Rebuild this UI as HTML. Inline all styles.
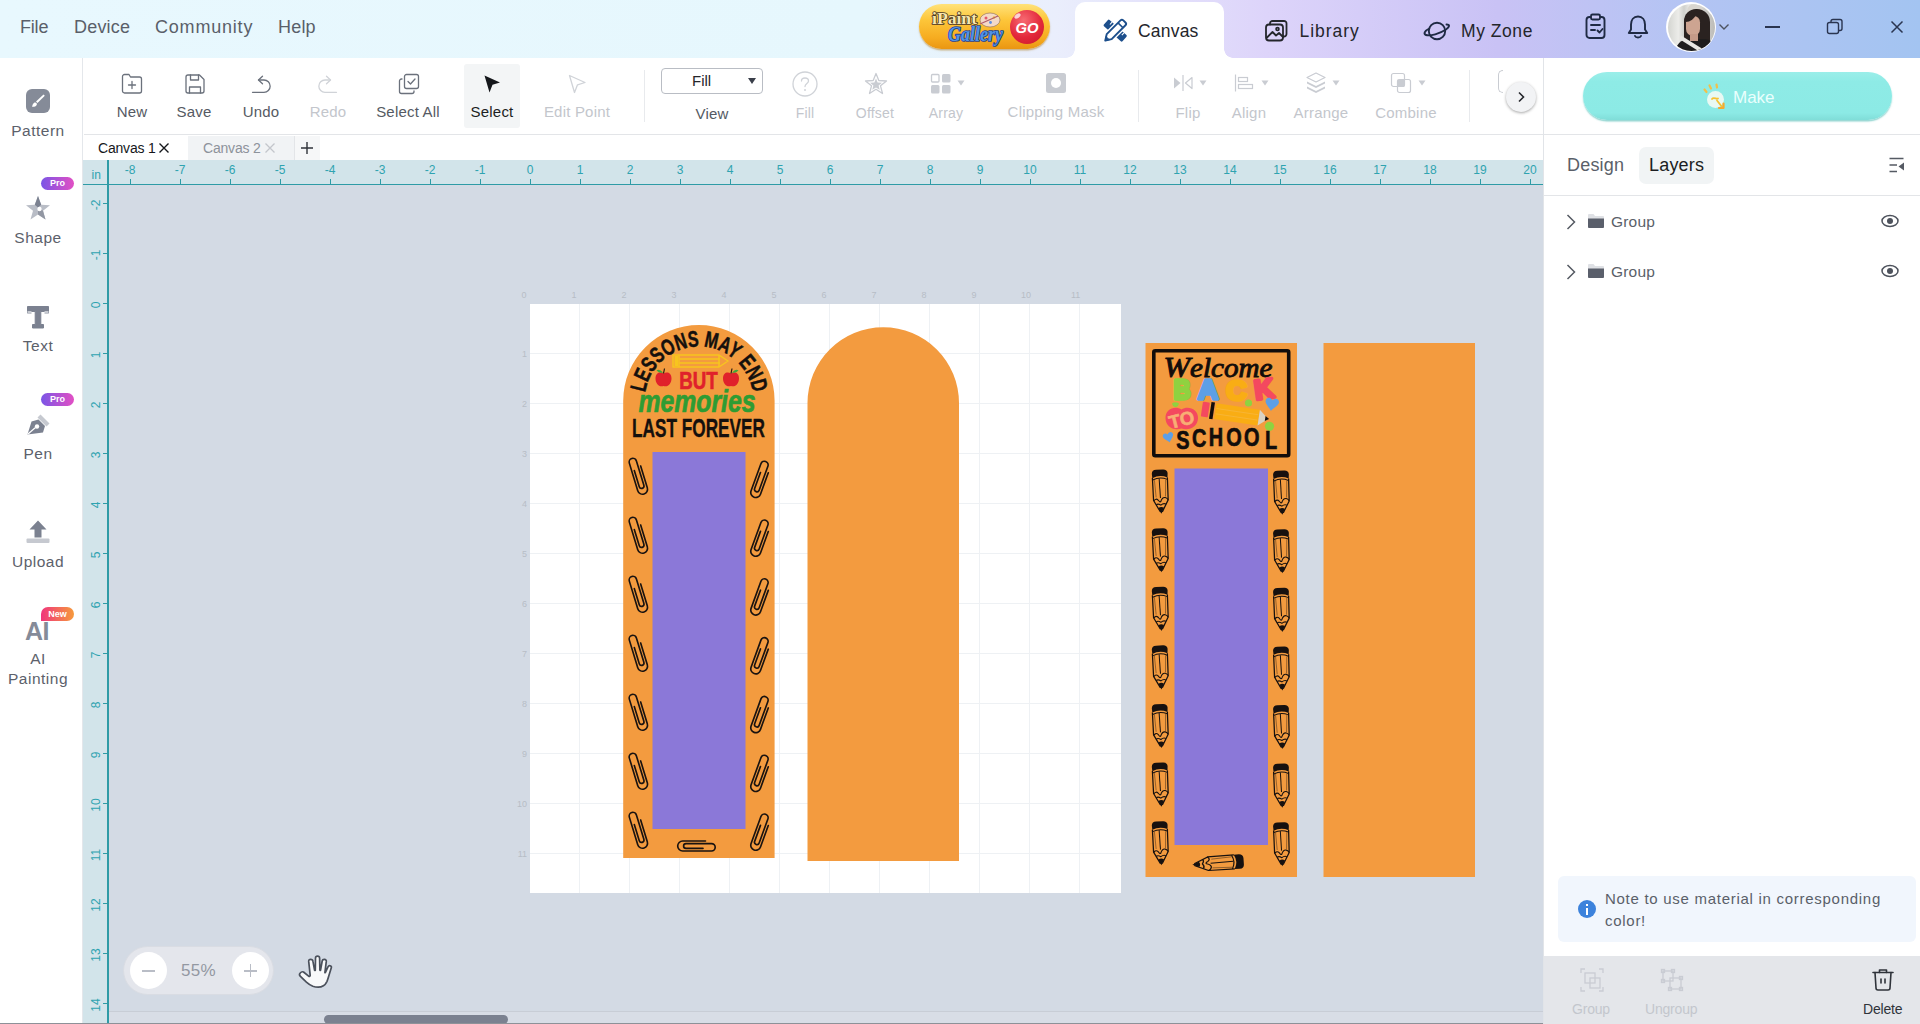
<!DOCTYPE html>
<html><head><meta charset="utf-8"><title>Canvas</title>
<style>
*{box-sizing:border-box;margin:0;padding:0}
html,body{width:1920px;height:1024px;overflow:hidden;background:#fff;font-family:"Liberation Sans",sans-serif;color:#555a63}
.abs{position:absolute}
#top{position:absolute;left:0;top:0;width:1920px;height:58px;background:linear-gradient(90deg,#e8f8fe 0%,#e6f7fd 45%,#eaeefc 55%,#ddd4fa 66%,#c9c2f5 78%,#b3c4f3 88%,#a3c4f1 100%)}
.menu{position:absolute;top:17px;font-size:18px;color:#5a5f69;letter-spacing:.2px}
#tabactive{position:absolute;left:1074.500px;top:2px;width:149.500px;height:56px;background:#fff;border-radius:10px 10px 0 0}
.toptab{position:absolute;top:21px;font-size:17.500px;line-height:20px;color:#24262b}
#side{position:absolute;left:0;top:58px;width:83px;height:966px;background:#fff;border-right:1px solid #e4e7eb}
.sitem{position:absolute;left:0;width:76px;text-align:center;font-size:15.5px;color:#5c616b;letter-spacing:.5px;line-height:20px}
.badge{position:absolute;height:13px;border-radius:7px;color:#fff;font-size:9px;line-height:13px;text-align:center;font-weight:bold}
#tool{position:absolute;left:84px;top:58px;width:1459px;height:77px;background:#fff;border-bottom:1px solid #e3e5e8}
.tl{position:absolute;top:45px;font-size:15px;color:#555a63;text-align:center;white-space:nowrap;transform:translateX(-50%);letter-spacing:.2px}
.tl.dis{color:#c3c6cc}
.ti{position:absolute}
#tabs{position:absolute;left:84px;top:135px;width:1459px;height:25px;background:#fff}
#hr{position:absolute;left:83px;top:160px;width:1460px;height:25px;background:#d2e4ea;border-bottom:1px solid #2e9ba6}
#vr{position:absolute;left:83px;top:160px;width:26px;height:864px;background:#d2e4ea;border-right:2px solid #2e9ba6}
.hn{position:absolute;top:3px;font-size:12px;color:#2fa3b0;transform:translateX(-50%);white-space:nowrap}
.ht{position:absolute;top:19px;width:1px;height:5px;background:#2e9ba6}
.vn{position:absolute;left:-2px;width:30px;height:14px;line-height:14px;font-size:12px;color:#2fa3b0;text-align:center;transform:rotate(-90deg);white-space:nowrap}
.vt{position:absolute;left:20px;width:4px;height:1px;background:#2e9ba6}
#cv{position:absolute;left:109px;top:185px;width:1434px;height:839px;background:#d3dae4;overflow:hidden}
#mat{position:absolute;left:421px;top:119px;width:591px;height:589px;background:#fff;
 background-image:linear-gradient(90deg,#eef1f4 1px,transparent 1px),linear-gradient(#eef1f4 1px,transparent 1px);background-size:50px 50px;background-position:-1px -1px}
.mn{position:absolute;font-size:9px;color:#b7bdc6;white-space:nowrap}
#right{position:absolute;left:1543px;top:58px;width:377px;height:966px;background:#fff;border-left:1px solid #e1e4e8}
</style></head><body>
<div id="top">
 <div class="menu" style="left:20px;letter-spacing:-.2px">File</div>
 <div class="menu" style="left:74px">Device</div>
 <div class="menu" style="left:155px;letter-spacing:.8px">Community</div>
 <div class="menu" style="left:278px">Help</div>
 <!-- gallery badge -->
 <div class="abs" style="left:918.500px;top:4px;width:131px;height:45px;border-radius:23px;background:linear-gradient(180deg,#ffe27a 0%,#fdc63a 35%,#f6ac20 75%,#ea9612 100%);box-shadow:0 1.500px 1.500px rgba(170,115,20,.5)"></div>
 <div class="abs" style="left:1010px;top:9.500px;width:34px;height:34px;border-radius:50%;background:radial-gradient(circle at 40% 30%,#f76a72 0%,#e3283a 55%,#c9152a 100%)"></div>
 <div class="abs" style="left:1014px;top:14px;width:7px;height:4px;border-radius:50%;background:rgba(255,255,255,.75);transform:rotate(-35deg)"></div>
 <svg class="abs" style="left:918px;top:0" width="132" height="54" viewBox="0 0 132 54">
  <ellipse cx="72" cy="20" rx="10" ry="7" fill="#f4d9c6" stroke="#8a6a58" stroke-width=".600"/>
  <circle cx="68" cy="18" r="1.500" fill="#e25a6a"/><circle cx="72.500" cy="22.500" r="1.400" fill="#5d8fe0"/><circle cx="76" cy="17.500" r="1.300" fill="#f2c23e"/>
  <path d="M62 24 L80 16" stroke="#b05a6a" stroke-width="1.200"/>
  <text x="14" y="24" font-family="Liberation Serif, serif" font-weight="bold" font-size="16.500" fill="#f6e7ae" stroke="#4a3526" stroke-width="1.600" paint-order="stroke" stroke-linejoin="round" textLength="45" lengthAdjust="spacingAndGlyphs">iPaint</text>
  <text x="30" y="41" font-family="Liberation Serif, serif" font-weight="bold" font-style="italic" font-size="20" fill="#4f93e6" stroke="#1f3f8f" stroke-width="1.700" paint-order="stroke" stroke-linejoin="round" textLength="55" lengthAdjust="spacingAndGlyphs">Gallery</text>
  <text x="109" y="32.500" font-family="Liberation Sans, sans-serif" font-weight="bold" font-style="italic" font-size="15" fill="#fff" text-anchor="middle" textLength="23" lengthAdjust="spacingAndGlyphs">GO</text>
 </svg>
 <div id="tabactive"></div>
 <div class="abs" style="left:1066px;top:49px;width:9px;height:9px;background:radial-gradient(circle at 0 0,rgba(255,255,255,0) 8.500px,#fff 9px)"></div>
 <div class="abs" style="left:1224px;top:49px;width:9px;height:9px;background:radial-gradient(circle at 100% 0,rgba(255,255,255,0) 8.500px,#fff 9px)"></div>
 <!-- canvas icon -->
 <svg class="abs" style="left:1101px;top:17px" width="28" height="28" viewBox="0 0 28 28"><g transform="translate(14.200 13.600)"><g transform="rotate(42)"><rect x="-12.500" y="-4.200" width="25" height="8.400" rx="1.200" fill="#1d4f8c"/><path d="M-8 -4.200 v3.200 M-4 -4.200 v2.400 M4 -4.200 v2.400 M8 -4.200 v3.200" stroke="#fff" stroke-width="1.100"/></g><g transform="rotate(-45)"><path d="M-14 0 L-8.500 -3.500 H11 a2 2 0 0 1 2 2 V1.500 a2 2 0 0 1 -2 2 H-8.500 Z" fill="#fff" stroke="#fff" stroke-width="4.500" stroke-linejoin="round"/><path d="M-14 0 L-8.500 -3.500 H11 a2 2 0 0 1 2 2 V1.500 a2 2 0 0 1 -2 2 H-8.500 Z" fill="#fff" stroke="#1d4f8c" stroke-width="1.900" stroke-linejoin="round"/><path d="M7.500 -3.500 V3.500" stroke="#1d4f8c" stroke-width="1.600"/><path d="M-14 0 L-10.800 -2.100 V2.100 Z" fill="#1d4f8c" stroke="#1d4f8c" stroke-width="1"/></g></g></svg>
 <div class="toptab" style="left:1138px;letter-spacing:.2px">Canvas</div>
 <!-- library icon -->
 <svg class="abs" style="left:1263px;top:18px" width="26" height="26" viewBox="0 0 26 26"><g fill="none" stroke="#24262b" stroke-width="1.8" stroke-linejoin="round" stroke-linecap="round"><rect x="3" y="6.5" width="17" height="16" rx="3"/><path d="M7 6.5 V5.5 a2.5 2.5 0 0 1 2.5 -2.5 H21 a2.5 2.5 0 0 1 2.500 2.500 V16 a2.500 2.500 0 0 1 -2.500 2.500 H20"/><path d="M4 19.500 L9.500 14 L13 17.500 L16 15 L20 19"/><circle cx="14.500" cy="11" r="1.400"/></g></svg>
 <div class="toptab" style="left:1299.500px;letter-spacing:.95px">Library</div>
 <!-- my zone icon -->
 <svg class="abs" style="left:1422px;top:17px" width="30" height="28" viewBox="0 0 30 28"><g fill="none" stroke="#1f2a44" stroke-width="1.9" stroke-linecap="round"><circle cx="15" cy="14" r="8.200"/><path d="M7.300 11.500 C2 14 1.500 17 4 18 C8 19.500 18 16.500 24 12.500 C28 9.800 28 7.300 24.500 7.500"/></g></svg>
 <div class="toptab" style="left:1461px;letter-spacing:.55px">My Zone</div>
 <!-- clipboard -->
 <svg class="abs" style="left:1583px;top:12px" width="26" height="30" viewBox="0 0 26 30"><g fill="none" stroke="#1f2a44" stroke-width="1.9" stroke-linejoin="round" stroke-linecap="round"><rect x="3.500" y="5" width="18" height="21" rx="3"/><rect x="8" y="2.500" width="9" height="5" rx="1.500" fill="#c9c6f4"/><path d="M8 13 H17 M8 18 H12"/><path d="M14.500 18.500 L16.500 20.500 L19.500 17"/></g></svg>
 <!-- bell -->
 <svg class="abs" style="left:1625px;top:13px" width="26" height="28" viewBox="0 0 26 28"><g fill="none" stroke="#1f2a44" stroke-width="1.9" stroke-linejoin="round" stroke-linecap="round"><path d="M13 3.500 C8.500 3.500 6 7 6 11.500 V16.500 L3.800 20 H22.200 L20 16.500 V11.500 C20 7 17.500 3.500 13 3.500 Z"/><path d="M10 23 C10.800 25 15.200 25 16 23"/></g></svg>
 <!-- avatar -->
 <div class="abs" style="left:1666px;top:2px;width:50px;height:50px;border-radius:50%;background:#fff"></div>
 <div class="abs" style="left:1667.500px;top:3.500px;width:47px;height:47px;border-radius:50%;overflow:hidden;background:linear-gradient(90deg,#d4d5d1 0%,#ecece9 22%,#cfd0cc 34%,#e6e6e3 44%,#bdbcb8 100%)">
   <div class="abs" style="left:19px;top:0;width:16px;height:9px;border-radius:8px 8px 2px 2px;background:#d9d6d0"></div>
   <div class="abs" style="left:16px;top:5px;width:26px;height:38px;border-radius:12px 13px 4px 4px;background:#2a2220"></div>
   <div class="abs" style="left:18.500px;top:12px;width:14px;height:20px;border-radius:6px 7px 8px 8px;background:#cda491"></div>
   <div class="abs" style="left:18px;top:10px;width:9px;height:8px;border-radius:0 0 8px 0;background:#2a2220;transform:skewX(-18deg)"></div>
   <div class="abs" style="left:7px;top:35px;width:40px;height:14px;border-radius:14px 10px 0 0;background:#1e1c1c"></div>
   <div class="abs" style="left:22px;top:30px;width:8px;height:7px;background:#c49a88"></div>
   <div class="abs" style="left:10px;top:38px;width:26px;height:4px;background:#e8e6e2;transform:rotate(32deg)"></div>
 </div>
 <svg class="abs" style="left:1718px;top:23px" width="12" height="8" viewBox="0 0 12 8"><path d="M1.500 1.500 L6 6 L10.500 1.500" fill="none" stroke="#4d5360" stroke-width="1.400"/></svg>
 <!-- window controls -->
 <div class="abs" style="left:1765px;top:26px;width:15px;height:1.500px;background:#2a3550"></div>
 <svg class="abs" style="left:1825px;top:17px" width="20" height="20" viewBox="0 0 20 20"><g fill="none" stroke="#2a3550" stroke-width="1.400"><rect x="2.500" y="5.500" width="11" height="11" rx="2"/><path d="M6 5.500 V4.500 a2 2 0 0 1 2 -2 H15 a2 2 0 0 1 2 2 V11.500 a2 2 0 0 1 -2 2 H13.500"/></g></svg>
 <svg class="abs" style="left:1889px;top:19px" width="16" height="16" viewBox="0 0 16 16"><path d="M2.500 2.500 L13.500 13.500 M13.500 2.500 L2.500 13.500" stroke="#2a3550" stroke-width="1.500" fill="none"/></svg>
</div>
<div id="side">
 <!-- Pattern -->
 <div class="abs" style="left:26px;top:31px;width:24px;height:24px;border-radius:6px;background:#858b98"></div>
 <svg class="abs" style="left:26px;top:31px" width="24" height="24" viewBox="0 0 24 24"><path d="M17.500 5.500 L18.800 6.800 L11.500 14 L10 12.500 Z" fill="#fff"/><path d="M6 17.800 C6.500 16.800 6.600 14.500 8.500 13.600 C10 13 11.300 14.300 10.800 15.800 C10 17.800 7.500 18 6 17.800 Z" fill="#fff"/></svg>
 <div class="sitem" style="top:63px">Pattern</div>
 <!-- Shape -->
 <div class="badge" style="left:41px;top:119px;width:33px;background:linear-gradient(90deg,#7a55e6,#e24fc4)">Pro</div>
 <svg class="abs" style="left:25px;top:136px" width="26" height="28" viewBox="0 0 26 28"><path d="M13 2 L16.200 10.800 L25 11.200 L18 16.800 L20.500 25.500 L13 20.500 L5.500 25.500 L8 16.800 L1 11.200 L9.800 10.800 Z" fill="#b9bdc6"/><path d="M13 2 L16.200 10.800 L13 13.500 L9.800 10.800 Z" fill="#7b8190"/><path d="M13 13.500 L18 16.800 L20.500 25.500 L13 20.500 Z" fill="#9297a3"/><circle cx="14.500" cy="15" r="2.200" fill="#fff"/></svg>
 <div class="sitem" style="top:170px">Shape</div>
 <!-- Text -->
 <svg class="abs" style="left:26px;top:247px" width="24" height="26" viewBox="0 0 24 26"><path d="M1.500 1.500 H22.500 V8 H20 V6.500 H14.800 V19.500 H17.500 V23 H6.500 V19.500 H9.200 V6.500 H4 V8 H1.500 Z" fill="#7b8190" stroke="#7b8190" stroke-width="1" stroke-linejoin="round"/><rect x="1.500" y="6" width="4" height="3" fill="#c6c9d0"/><rect x="18.500" y="6" width="4" height="3" fill="#c6c9d0"/></svg>
 <div class="sitem" style="top:278px">Text</div>
 <!-- Pen -->
 <div class="badge" style="left:41px;top:335px;width:33px;background:linear-gradient(90deg,#7a55e6,#e24fc4)">Pro</div>
 <svg class="abs" style="left:25px;top:353px" width="28" height="28" viewBox="0 0 28 28"><path d="M2.500 23.500 L6.500 10.500 L13.500 8.500 L20 15 L18 21.500 Z" fill="#7b8190"/><path d="M15.500 3.500 L24.500 12.500 L21.500 15.500 L12.500 6.500 Z" fill="#c6c9d0"/><circle cx="12" cy="15.500" r="2.200" fill="#fff"/><path d="M3 23 L10.500 16.500" stroke="#fff" stroke-width="1.200"/></svg>
 <div class="sitem" style="top:386px">Pen</div>
 <!-- Upload -->
 <svg class="abs" style="left:25px;top:461px" width="26" height="26" viewBox="0 0 26 26"><path d="M13 1.500 L21.500 10.500 H16.500 V18.500 H9.500 V10.500 H4.500 Z" fill="#7b8190"/><rect x="1.500" y="19.500" width="23" height="4.500" rx="1" fill="#c6c9d0"/></svg>
 <div class="sitem" style="top:494px">Upload</div>
 <!-- AI -->
 <div class="abs" style="left:41px;top:549px;width:33px;height:14px;border-radius:7px 7px 7px 0;background:linear-gradient(90deg,#f0357d,#f69a3c);color:#fff;font-size:9px;line-height:14px;text-align:center;font-weight:bold">New</div>
 <div class="abs" style="left:25px;top:559px;font-size:25px;font-weight:bold;color:#858b98;letter-spacing:-.5px">AI</div>
 <div class="sitem" style="top:591px">AI<br>Painting</div>
</div>
<div id="tool">
 <!-- New (center x=132 abs => 48 rel) -->
 <svg class="ti" style="left:36px;top:14px" width="24" height="24" viewBox="0 0 24 24"><g fill="none" stroke="#6b717c" stroke-width="1.300" stroke-linejoin="round" stroke-linecap="round"><path d="M2.500 4.500 a2 2 0 0 1 2 -2 H9 L10.500 5 H19.500 a2 2 0 0 1 2 2 V19 a2 2 0 0 1 -2 2 H4.500 a2 2 0 0 1 -2 -2 Z"/><path d="M12 9.500 V16.500 M8.500 13 H15.500"/></g></svg>
 <div class="tl" style="left:48px">New</div>
 <!-- Save 194 => 110 -->
 <svg class="ti" style="left:99px;top:14px" width="24" height="24" viewBox="0 0 24 24"><g fill="none" stroke="#6b717c" stroke-width="1.300" stroke-linejoin="round" stroke-linecap="round"><path d="M3 5 a2 2 0 0 1 2 -2 H16.500 L21 7.500 V19 a2 2 0 0 1 -2 2 H5 a2 2 0 0 1 -2 -2 Z"/><path d="M7.500 3 V8 H15.500 V3"/><path d="M6.500 21 V15 H17.500 V21"/></g></svg>
 <div class="tl" style="left:110px">Save</div>
 <!-- Undo 261 => 177 -->
 <svg class="ti" style="left:165px;top:14px" width="24" height="24" viewBox="0 0 24 24"><g fill="none" stroke="#6b717c" stroke-width="1.300" stroke-linejoin="round" stroke-linecap="round"><path d="M13.500 4.200 L9.500 8 L13.500 11.800"/><path d="M9.500 8 H15 A6.150 6.150 0 0 1 15 20.300 H3.500"/></g></svg>
 <div class="tl" style="left:177px">Undo</div>
 <!-- Redo 328 => 244 -->
 <svg class="ti" style="left:232px;top:14px" width="24" height="24" viewBox="0 0 24 24"><g fill="none" stroke="#d0d3d8" stroke-width="1.300" stroke-linejoin="round" stroke-linecap="round"><path d="M10.500 4.200 L14.500 8 L10.500 11.800"/><path d="M14.500 8 H9 A6.150 6.150 0 0 0 9 20.300 H20.500"/></g></svg>
 <div class="tl dis" style="left:244px">Redo</div>
 <!-- Select All 408 => 324 -->
 <svg class="ti" style="left:313px;top:14px" width="24" height="24" viewBox="0 0 24 24"><g fill="none" stroke="#6b717c" stroke-width="1.300" stroke-linejoin="round" stroke-linecap="round"><rect x="7.500" y="2.500" width="14" height="14" rx="2"/><path d="M5 7 H4.500 a2 2 0 0 0 -2 2 V19.500 a2 2 0 0 0 2 2 H15 a2 2 0 0 0 2 -2 V19"/><path d="M11 9.500 L13.500 12 L18 7"/></g></svg>
 <div class="tl" style="left:324px">Select All</div>
 <!-- Select 492 => 408 ; bg 464..520 -->
 <div class="abs" style="left:380px;top:6px;width:56px;height:64px;background:#f3f5f6;border-radius:3px"></div>
 <svg class="ti" style="left:397px;top:15px" width="22" height="22" viewBox="0 0 22 22"><path d="M3.500 2.500 L19 9.500 L11.500 11.800 L8.500 19.500 Z" fill="#15171b"/></svg>
 <div class="tl" style="left:408px;color:#1c1e22">Select</div>
 <!-- Edit point 577 => 493 -->
 <svg class="ti" style="left:482px;top:15px" width="22" height="22" viewBox="0 0 22 22"><path d="M3.500 2.500 L19 9.500 L11.500 11.800 L8.500 19.500 Z" fill="none" stroke="#d0d3d8" stroke-width="1.300" stroke-linejoin="round"/></svg>
 <div class="tl dis" style="left:493px">Edit Point</div>
 <div class="abs" style="left:560px;top:12px;width:1px;height:52px;background:#e8eaed"></div>
 <!-- Fill dropdown 661..763, y 68..94 -->
 <div class="abs" style="left:577px;top:10px;width:102px;height:26px;border:1px solid #b9bdc4;border-radius:4px"></div>
 <div class="abs" style="left:608px;top:14px;font-size:15px;color:#24262b">Fill</div>
 <svg class="abs" style="left:663px;top:19px" width="10" height="8" viewBox="0 0 10 8"><path d="M1 1 H9 L5 7 Z" fill="#3a3f4a"/></svg>
 <div class="tl" style="left:628px;top:47px">View</div>
 <!-- Fill ? 805 => 721 -->
 <svg class="ti" style="left:707px;top:12px" width="28" height="28" viewBox="0 0 28 28"><circle cx="14" cy="14" r="12" fill="none" stroke="#d0d3d8" stroke-width="1.300"/><path d="M10.500 11 C10.500 7 17.500 7 17.500 11 C17.500 13.500 14 13.500 14 16.500" fill="none" stroke="#d0d3d8" stroke-width="1.300" stroke-linecap="round"/><circle cx="14" cy="20" r="1" fill="#d0d3d8"/></svg>
 <div class="tl dis" style="left:721px;top:47px;font-size:14px">Fill</div>
 <!-- Offset 875 => 791 -->
 <svg class="ti" style="left:779px;top:13px" width="26" height="26" viewBox="0 0 26 26"><path d="M13 2.500 L15.800 9.500 L23.500 10 L17.500 14.800 L19.500 22.500 L13 18.300 L6.500 22.500 L8.500 14.800 L2.500 10 L10.200 9.500 Z" fill="none" stroke="#c9ccd2" stroke-width="1.300" stroke-linejoin="round"/><path d="M13 7.500 L14.600 11.500 L19 11.800 L15.600 14.500 L16.700 18.800 L13 16.400 L9.300 18.800 L10.400 14.500 L7 11.800 L11.400 11.500 Z" fill="#c9ccd2"/></svg>
 <div class="tl dis" style="left:791px;top:47px;font-size:14px">Offset</div>
 <!-- Array 946 => 862 -->
 <svg class="ti" style="left:846px;top:15px" width="22" height="22" viewBox="0 0 22 22"><rect x="1.500" y="1.500" width="7.500" height="7.500" rx="1" fill="none" stroke="#c9ccd2" stroke-width="1.300"/><rect x="12" y="1" width="8.500" height="8.500" rx="1.500" fill="#c9ccd2"/><rect x="1" y="12" width="8.500" height="8.500" rx="1.500" fill="#c9ccd2"/><rect x="12" y="12" width="8.500" height="8.500" rx="1.500" fill="#c9ccd2"/></svg>
 <svg class="abs" style="left:873px;top:22px" width="8" height="6" viewBox="0 0 8 6"><path d="M.500 .500 H7.500 L4 5.500 Z" fill="#c9ccd2"/></svg>
 <div class="tl dis" style="left:862px;top:47px;font-size:14px">Array</div>
 <!-- Clipping mask 1056 => 972 -->
 <svg class="ti" style="left:961px;top:14px" width="22" height="22" viewBox="0 0 22 22"><rect x="1" y="1" width="20" height="20" rx="2.500" fill="#c9ccd2"/><circle cx="11" cy="11" r="5" fill="#fff"/></svg>
 <div class="tl dis" style="left:972px">Clipping Mask</div>
 <div class="abs" style="left:1054px;top:12px;width:1px;height:52px;background:#e8eaed"></div>
 <!-- Flip 1188 => 1104 -->
 <svg class="ti" style="left:1088px;top:15px" width="22" height="20" viewBox="0 0 22 20"><path d="M2 4.500 L8.500 10 L2 15.500 Z" fill="#c9ccd2"/><path d="M20 4.500 L13.500 10 L20 15.500 Z" fill="none" stroke="#c9ccd2" stroke-width="1.200" stroke-linejoin="round"/><path d="M11 2 V18" stroke="#c9ccd2" stroke-width="1.200"/></svg>
 <svg class="abs" style="left:1115px;top:22px" width="8" height="6" viewBox="0 0 8 6"><path d="M.500 .500 H7.500 L4 5.500 Z" fill="#c9ccd2"/></svg>
 <div class="tl dis" style="left:1104px;top:46px">Flip</div>
 <!-- Align 1249 => 1165 -->
 <svg class="ti" style="left:1149px;top:15px" width="22" height="20" viewBox="0 0 22 20"><g fill="none" stroke="#c9ccd2" stroke-width="1.200"><path d="M2.500 1.500 V18.500"/><rect x="5.500" y="4.500" width="9" height="4"/><rect x="5.500" y="11.500" width="14" height="4"/></g></svg>
 <svg class="abs" style="left:1177px;top:22px" width="8" height="6" viewBox="0 0 8 6"><path d="M.500 .500 H7.500 L4 5.500 Z" fill="#c9ccd2"/></svg>
 <div class="tl dis" style="left:1165px;top:46px">Align</div>
 <!-- Arrange 1321 => 1237 -->
 <svg class="ti" style="left:1221px;top:13px" width="22" height="24" viewBox="0 0 22 24"><path d="M11 2 L20 6.500 L11 11 L2 6.500 Z" fill="none" stroke="#c9ccd2" stroke-width="1.200" stroke-linejoin="round"/><path d="M2 10.500 L11 15 L20 10.500 L20 12.500 L11 17 L2 12.500 Z" fill="#c9ccd2"/><path d="M2 15.500 L11 20 L20 15.500 L20 17.500 L11 22 L2 17.500 Z" fill="#c9ccd2"/></svg>
 <svg class="abs" style="left:1248px;top:22px" width="8" height="6" viewBox="0 0 8 6"><path d="M.500 .500 H7.500 L4 5.500 Z" fill="#c9ccd2"/></svg>
 <div class="tl dis" style="left:1237px;top:46px">Arrange</div>
 <!-- Combine 1406 => 1322 -->
 <svg class="ti" style="left:1306px;top:14px" width="22" height="22" viewBox="0 0 22 22"><g fill="none" stroke="#c9ccd2" stroke-width="1.200"><rect x="1.500" y="1.500" width="13" height="13" rx="2"/><rect x="7.500" y="7.500" width="13" height="13" rx="2"/></g><rect x="7.500" y="7.500" width="7" height="7" fill="#c9ccd2"/></svg>
 <svg class="abs" style="left:1334px;top:22px" width="8" height="6" viewBox="0 0 8 6"><path d="M.500 .500 H7.500 L4 5.500 Z" fill="#c9ccd2"/></svg>
 <div class="tl dis" style="left:1322px;top:46px">Combine</div>
 <div class="abs" style="left:1385px;top:12px;width:1px;height:52px;background:#e8eaed"></div>
 <!-- partial bracket -->
 <div class="abs" style="left:1414px;top:12px;width:5px;height:23px;border:1.500px solid #c9ccd2;border-right:none;border-radius:5px 0 0 5px"></div>
 <!-- scroll arrow 1521 => 1437 -->
 <div class="abs" style="left:1422px;top:24px;width:30px;height:30px;border-radius:50%;background:#f2f3f5;box-shadow:0 1px 3px rgba(0,0,0,.35)"></div>
 <svg class="abs" style="left:1431px;top:32px" width="12" height="14" viewBox="0 0 12 14"><path d="M4 2.500 L8.500 7 L4 11.500" fill="none" stroke="#24262b" stroke-width="1.600"/></svg>
</div>
<div id="tabs">
 <div class="abs" style="left:104px;top:1px;width:107px;height:24px;background:#f1f3f5"></div>
 <div class="abs" style="left:210px;top:1px;width:1px;height:24px;background:#e3e5e8"></div>
 <div class="abs" style="left:211px;top:1px;width:25px;height:24px;background:#f6f7f8"></div>
 <div class="abs" style="left:14px;top:5px;font-size:14px;color:#15171b;letter-spacing:-.2px">Canvas 1</div>
 <svg class="abs" style="left:74px;top:7px" width="12" height="12" viewBox="0 0 12 12"><path d="M1.500 1.500 L10.500 10.500 M10.500 1.500 L1.500 10.500" stroke="#15171b" stroke-width="1.400"/></svg>
 <div class="abs" style="left:119px;top:5px;font-size:14px;color:#8d929b;letter-spacing:-.2px">Canvas 2</div>
 <svg class="abs" style="left:180px;top:7px" width="12" height="12" viewBox="0 0 12 12"><path d="M1.500 1.500 L10.500 10.500 M10.500 1.500 L1.500 10.500" stroke="#c3c6cc" stroke-width="1.300"/></svg>
 <svg class="abs" style="left:216px;top:6px" width="14" height="14" viewBox="0 0 14 14"><path d="M7 1 V13 M1 7 H13" stroke="#2f333a" stroke-width="1.400"/></svg>
</div>
<div id="cv">
<div id="mat"></div>
<div class="mn" style="left:412px;top:105px;width:6px;text-align:center">0</div>
<div class="mn" style="left:462px;top:105px;width:6px;text-align:center">1</div>
<div class="mn" style="left:512px;top:105px;width:6px;text-align:center">2</div>
<div class="mn" style="left:562px;top:105px;width:6px;text-align:center">3</div>
<div class="mn" style="left:612px;top:105px;width:6px;text-align:center">4</div>
<div class="mn" style="left:662px;top:105px;width:6px;text-align:center">5</div>
<div class="mn" style="left:712px;top:105px;width:6px;text-align:center">6</div>
<div class="mn" style="left:762px;top:105px;width:6px;text-align:center">7</div>
<div class="mn" style="left:812px;top:105px;width:6px;text-align:center">8</div>
<div class="mn" style="left:862px;top:105px;width:6px;text-align:center">9</div>
<div class="mn" style="left:912px;top:105px;width:6px;text-align:center">10</div>
<div class="mn" style="left:962px;top:105px;width:6px;text-align:center">11</div>
<div class="mn" style="left:394px;top:163.5px;width:24px;text-align:right">1</div>
<div class="mn" style="left:394px;top:213.5px;width:24px;text-align:right">2</div>
<div class="mn" style="left:394px;top:263.5px;width:24px;text-align:right">3</div>
<div class="mn" style="left:394px;top:313.5px;width:24px;text-align:right">4</div>
<div class="mn" style="left:394px;top:363.5px;width:24px;text-align:right">5</div>
<div class="mn" style="left:394px;top:413.5px;width:24px;text-align:right">6</div>
<div class="mn" style="left:394px;top:463.5px;width:24px;text-align:right">7</div>
<div class="mn" style="left:394px;top:513.5px;width:24px;text-align:right">8</div>
<div class="mn" style="left:394px;top:563.5px;width:24px;text-align:right">9</div>
<div class="mn" style="left:394px;top:613.5px;width:24px;text-align:right">10</div>
<div class="mn" style="left:394px;top:663.5px;width:24px;text-align:right">11</div>
<svg class="abs" style="left:0;top:0" width="1434" height="839" viewBox="109 185 1434 839" font-family="Liberation Sans, sans-serif">
<defs>
<path id="clip" d="M5 -9 V13.8 A5 5 0 0 1 -5 13.8 V-15 A3.700 3.700 0 0 1 2.400 -15 V10.500 A2.400 2.400 0 0 1 -2.400 10.500 V-6.500" fill="none" stroke="#1a1310" stroke-width="1.650" stroke-linecap="round"/>
<g id="pen">
<path d="M-7.600 -13.900 L-7.900 -18.300 Q-7.600 -21.900 -3.500 -22 H3.500 Q7.600 -21.900 7.900 -18.300 L7.600 -13.900 Q0 -17.400 -7.600 -13.900 Z" fill="#17110f"/>
<path d="M-7.500 -14 L-7.300 8.500 L-1.200 19.800 L1.200 19.800 L7.300 8.500 L7.500 -14" fill="none" stroke="#17110f" stroke-width="1.250" stroke-linejoin="round"/>
<path d="M-7.300 -12 Q0 -15.300 7.300 -12" fill="none" stroke="#17110f" stroke-width="1"/>
<path d="M-0.800 -13.200 L-0.300 6.300" stroke="#17110f" stroke-width="1" fill="none"/>
<path d="M-5.600 -11.800 L-4.600 5.500 M5.600 -11.800 L4.800 5" stroke="#17110f" stroke-width=".550" fill="none" opacity=".75"/>
<path d="M-7.200 9 Q-5 5.800 -2.500 8.500 Q-1 11 -.100 9.800 Q1.500 5.300 4.500 6 Q6.700 6.500 7.200 8.500 M-4.800 12.800 Q-3 11.500 -.200 13.400 Q2.500 11.300 4.800 12.600" fill="none" stroke="#17110f" stroke-width="1.100" stroke-linejoin="round"/>
<path d="M-2.900 16.300 Q0 14.300 2.900 16.300 L0 22 Z" fill="#17110f"/>
</g>
</defs>
<path d="M623.200 858 V400.700 A75.700 75.700 0 0 1 774.600 400.700 V858 Z" fill="#f39b3f"/>
<rect x="652.500" y="452" width="93" height="377" fill="#8b78d8"/>
<path id="arc1" d="M645.17 392.47 A54.5 54.5 0 0 1 752.83 392.47" fill="none"/>
<text font-size="22.500" font-weight="bold" fill="#15100d" stroke="#15100d" stroke-width=".500" textLength="154.1" lengthAdjust="spacingAndGlyphs"><textPath href="#arc1" textLength="154.1" lengthAdjust="spacingAndGlyphs">LESSONS MAY END</textPath></text>
<g fill="none" stroke="#f7c51e" stroke-width="1.500" stroke-linejoin="round"><path d="M673 355 H719 L728 361 L719 367 H673 Z"/><path d="M679 355 V367 M679 359 H720 M679 363 H720 M719 355 V367"/></g><rect x="674.500" y="356" width="3.500" height="10" fill="#f7c51e"/>
<path d="M663.5 373.5 C660.5 371.5 655.5 372 655.5 378.5 C655.5 383.5 659.0 387.5 663.5 386 C668.0 387.5 671.5 383.5 671.5 378.5 C671.5 372 666.5 371.5 663.5 373.5 Z" fill="#e0212b"/>
<path d="M663.5 373.5 L664.5 368.5" stroke="#2a1a10" stroke-width="1.200"/>
<path d="M731 373.5 C728 371.5 723 372 723 378.5 C723 383.5 726.5 387.5 731 386 C735.5 387.5 739 383.5 739 378.5 C739 372 734 371.5 731 373.5 Z" fill="#e0212b"/>
<path d="M731 373.5 L732 368.5" stroke="#2a1a10" stroke-width="1.200"/>
<path d="M663 372.500 Q659.500 368.500 656.500 370.500 Q659.500 373.500 663 372.500 Z" fill="#3da63a"/>
<path d="M732 372.500 Q735.500 368.500 738.500 370.500 Q735.500 373.500 732 372.500 Z" fill="#3da63a"/>
<text x="698.500" y="389" font-size="23.500" font-weight="bold" fill="#e0212b" stroke="#e0212b" stroke-width=".600" text-anchor="middle" textLength="38.500" lengthAdjust="spacingAndGlyphs">BUT</text>
<text x="697" y="411.500" font-size="31" font-weight="bold" font-style="italic" fill="#2e9c33" stroke="#2e9c33" stroke-width=".700" text-anchor="middle" textLength="117" lengthAdjust="spacingAndGlyphs">memories</text>
<text x="698.500" y="437" font-size="26" font-weight="bold" fill="#15100d" stroke="#15100d" stroke-width=".350" text-anchor="middle" textLength="133" lengthAdjust="spacingAndGlyphs">LAST FOREVER</text>
<use href="#clip" transform="translate(638.500 476.0) rotate(-17)"/>
<use href="#clip" transform="translate(760.500 479.5) rotate(20)"/>
<use href="#clip" transform="translate(638.500 535.0) rotate(-17)"/>
<use href="#clip" transform="translate(760.500 538.3) rotate(20)"/>
<use href="#clip" transform="translate(638.500 594.0) rotate(-17)"/>
<use href="#clip" transform="translate(760.500 597.1) rotate(20)"/>
<use href="#clip" transform="translate(638.500 653.0) rotate(-17)"/>
<use href="#clip" transform="translate(760.500 655.9) rotate(20)"/>
<use href="#clip" transform="translate(638.500 712.0) rotate(-17)"/>
<use href="#clip" transform="translate(760.500 714.7) rotate(20)"/>
<use href="#clip" transform="translate(638.500 771.0) rotate(-17)"/>
<use href="#clip" transform="translate(760.500 773.5) rotate(20)"/>
<use href="#clip" transform="translate(638.500 830.0) rotate(-17)"/>
<use href="#clip" transform="translate(760.500 832.3) rotate(20)"/>
<use href="#clip" transform="translate(696.500 846) scale(1 -1) rotate(90)"/>
<path d="M807.500 861 V403 A75.750 75.750 0 0 1 959 403 V861 Z" fill="#f39b3f"/>
<rect x="1145.500" y="343" width="151.500" height="534" fill="#f39b3f"/>
<rect x="1174.500" y="468.500" width="93.500" height="376.500" fill="#8b78d8"/>
<rect x="1153.800" y="350.700" width="134.900" height="105" rx="1.500" fill="none" stroke="#120d0b" stroke-width="3.600"/>
<text x="1163.500" y="377.300" font-family="Liberation Serif, serif" font-style="italic" fill="#120d0b" stroke="#120d0b" stroke-width=".900" textLength="109" lengthAdjust="spacingAndGlyphs"><tspan font-size="29">W</tspan><tspan font-size="26.500">elcome</tspan></text>
<text x="1182" y="399" font-size="27.500" font-weight="bold" fill="#8fd240" stroke="#8fd240" stroke-width="3.600" stroke-linejoin="round" text-anchor="middle" transform="rotate(0 1182 389)" textLength="17" lengthAdjust="spacingAndGlyphs">B</text>
<text x="1208" y="399" font-size="27.500" font-weight="bold" fill="#5d9fe6" stroke="#5d9fe6" stroke-width="3.600" stroke-linejoin="round" text-anchor="middle" transform="rotate(0 1208 389)" textLength="20.5" lengthAdjust="spacingAndGlyphs">A</text>
<text x="1236.5" y="399.5" font-size="27.500" font-weight="bold" fill="#f9ad14" stroke="#f9ad14" stroke-width="3.600" stroke-linejoin="round" text-anchor="middle" transform="rotate(0 1236.5 389.5)" textLength="20.5" lengthAdjust="spacingAndGlyphs">C</text>
<text x="1264" y="398.5" font-size="27.500" font-weight="bold" fill="#f4495f" stroke="#f4495f" stroke-width="3.600" stroke-linejoin="round" text-anchor="middle" transform="rotate(-8 1264 388.5)" textLength="19.5" lengthAdjust="spacingAndGlyphs">K</text>
<g transform="rotate(8.500 1235 414)"><rect x="1201.500" y="406.500" width="7" height="15" rx="1" fill="#f4495f"/><rect x="1210" y="405.500" width="3.500" height="17" fill="#120d0b"/><rect x="1215" y="406" width="44" height="16" fill="#f9ad14"/><path d="M1259 406 L1268.500 414 L1259 422 Z" fill="#d9d2c4"/><path d="M1265.500 411.500 L1269.500 414 L1265.500 416.500 Z" fill="#120d0b"/><path d="M1216 411.300 H1258 M1216 416.700 H1258" stroke="#f7b63a" stroke-width=".800"/></g>
<path d="M1181.500 409.500 C1176 405.500 1165 408 1165.500 418.500 C1166 426.500 1173 431 1181.500 428.500 C1190 431 1197.500 426.500 1198 418.500 C1198.500 408 1187 405.500 1181.500 409.500 Z" fill="#f4495f"/>
<path d="M1172 403.500 q3 -2.500 7 0 q-1 3.500 -3.500 3.500 q-2.500 0 -3.500 -3.500 Z" fill="#8fd240"/>
<text x="1181.500" y="426" font-size="18.500" font-weight="bold" fill="#f8ae74" stroke="#f8ae74" stroke-width=".600" text-anchor="middle" transform="rotate(-14 1181.500 419)" textLength="25.500" lengthAdjust="spacingAndGlyphs">TO</text>
<path transform="translate(1271.5 407) rotate(8) scale(1.35)" d="M0 3 C-1 1 -5 -1.500 -5 -4 C-5 -7 -1.500 -7.500 0 -5 C1.500 -7.500 5 -7 5 -4 C5 -1.500 1 1 0 3 Z" fill="#5d9fe6"/>
<path transform="translate(1169 439.5) rotate(-15) scale(1.05)" d="M0 3 C-1 1 -5 -1.500 -5 -4 C-5 -7 -1.500 -7.500 0 -5 C1.500 -7.500 5 -7 5 -4 C5 -1.500 1 1 0 3 Z" fill="#5d9fe6"/>
<circle cx="1248.500" cy="403" r="3.600" fill="#8fd240"/><circle cx="1269.500" cy="426.300" r="4.600" fill="#8fd240"/>
<text x="1182.8" y="449.2" font-size="25.500" font-weight="bold" fill="#120d0b" stroke="#120d0b" stroke-width=".700" text-anchor="middle" transform="translate(1182.8 0) scale(.780 1) translate(-1182.8 0)">S</text>
<text x="1199.2" y="447" font-size="25.500" font-weight="bold" fill="#120d0b" stroke="#120d0b" stroke-width=".700" text-anchor="middle" transform="translate(1199.2 0) scale(.780 1) translate(-1199.2 0)">C</text>
<text x="1216" y="446.2" font-size="25.500" font-weight="bold" fill="#120d0b" stroke="#120d0b" stroke-width=".700" text-anchor="middle" transform="translate(1216 0) scale(.780 1) translate(-1216 0)">H</text>
<text x="1234" y="446" font-size="25.500" font-weight="bold" fill="#120d0b" stroke="#120d0b" stroke-width=".700" text-anchor="middle" transform="translate(1234 0) scale(.780 1) translate(-1234 0)">O</text>
<text x="1251.8" y="446.5" font-size="25.500" font-weight="bold" fill="#120d0b" stroke="#120d0b" stroke-width=".700" text-anchor="middle" transform="translate(1251.8 0) scale(.780 1) translate(-1251.8 0)">O</text>
<text x="1271.2" y="449.2" font-size="25.500" font-weight="bold" fill="#120d0b" stroke="#120d0b" stroke-width=".700" text-anchor="middle" transform="translate(1271.2 0) scale(.780 1) translate(-1271.2 0)">L</text>
<use href="#pen" transform="translate(1160.500 491.7) rotate(-2.500)"/>
<use href="#pen" transform="translate(1281.600 492.7) rotate(-2)"/>
<use href="#pen" transform="translate(1160.500 550.3) rotate(-2.500)"/>
<use href="#pen" transform="translate(1281.600 551.3) rotate(-2)"/>
<use href="#pen" transform="translate(1160.500 608.9) rotate(-2.500)"/>
<use href="#pen" transform="translate(1281.600 609.9) rotate(-2)"/>
<use href="#pen" transform="translate(1160.500 667.5) rotate(-2.500)"/>
<use href="#pen" transform="translate(1281.600 668.5) rotate(-2)"/>
<use href="#pen" transform="translate(1160.500 726.1) rotate(-2.500)"/>
<use href="#pen" transform="translate(1281.600 727.1) rotate(-2)"/>
<use href="#pen" transform="translate(1160.500 784.7) rotate(-2.500)"/>
<use href="#pen" transform="translate(1281.600 785.7) rotate(-2)"/>
<use href="#pen" transform="translate(1160.500 843.3) rotate(-2.500)"/>
<use href="#pen" transform="translate(1281.600 844.3) rotate(-2)"/>
<use href="#pen" transform="translate(1218 863) rotate(86) scale(.930 1.170)"/>
<rect x="1323.500" y="343" width="151.500" height="534" fill="#f39b3f"/>
</svg>

<div class="abs" style="left:14px;top:761px;width:151px;height:49px;border-radius:25px;background:#e4e6ec;border:1px solid #d9dce3"></div>
<div class="abs" style="left:21px;top:767px;width:37px;height:37px;border-radius:50%;background:#fff"></div>
<div class="abs" style="left:123px;top:767px;width:37px;height:37px;border-radius:50%;background:#fff"></div>
<div class="abs" style="left:33px;top:785px;width:13px;height:1.500px;background:#b9bdc6"></div>
<div class="abs" style="left:135px;top:785px;width:13px;height:1.500px;background:#b9bdc6"></div>
<div class="abs" style="left:140.750px;top:779px;width:1.500px;height:13px;background:#b9bdc6"></div>
<div class="abs" style="left:72px;top:776px;font-size:17px;color:#9398a2;letter-spacing:.3px">55%</div>
<svg class="abs" style="left:171px;top:755px" width="80" height="60" viewBox="0 0 80 60"><path d="M23.500 32 L28.600 36.200 Q30 36.800 30.200 35.400 L28.700 21.400 Q28.600 19.300 30.700 19.300 Q32.700 19.300 32.900 21.200 L34.600 30.300 L35.300 30.300 L35.500 18 Q35.600 16.100 37.500 16.100 Q39.500 16.100 39.600 18 L39.900 30.300 L40.500 30.300 L42.200 21 Q42.500 19.200 44.400 19.300 Q46.400 19.500 46.300 21.400 L44.900 32.600 L45.300 32.600 L48 26.800 Q48.800 25.300 50.200 25.700 Q51.800 26.300 51.300 27.800 L48.700 36.300 Q47.800 39.500 46.900 41.600 Q45.500 44.500 43.400 45.700 Q41 47.200 38.100 47.200 Q35.500 47.200 32.800 46.300 Q29.500 45 26.400 42.200 L20.200 36.200 Q18.800 34.500 20.200 33 Q21.800 31.200 23.500 32 Z" fill="#f8f9fa" stroke="#4b515c" stroke-width="1.700" stroke-linejoin="round"/></svg>
<div class="abs" style="left:0;top:826px;width:1434px;height:13px;background:#d8dde6;border-top:1px solid #c8cdd6"></div>
<div class="abs" style="left:215px;top:830px;width:184px;height:9px;border-radius:5px;background:#7b8190"></div>
</div>
<div id="hr">
<div class="hn" style="left:47px">-8</div><div class="ht" style="left:47px"></div>
<div class="hn" style="left:97px">-7</div><div class="ht" style="left:97px"></div>
<div class="hn" style="left:147px">-6</div><div class="ht" style="left:147px"></div>
<div class="hn" style="left:197px">-5</div><div class="ht" style="left:197px"></div>
<div class="hn" style="left:247px">-4</div><div class="ht" style="left:247px"></div>
<div class="hn" style="left:297px">-3</div><div class="ht" style="left:297px"></div>
<div class="hn" style="left:347px">-2</div><div class="ht" style="left:347px"></div>
<div class="hn" style="left:397px">-1</div><div class="ht" style="left:397px"></div>
<div class="hn" style="left:447px">0</div><div class="ht" style="left:447px"></div>
<div class="hn" style="left:497px">1</div><div class="ht" style="left:497px"></div>
<div class="hn" style="left:547px">2</div><div class="ht" style="left:547px"></div>
<div class="hn" style="left:597px">3</div><div class="ht" style="left:597px"></div>
<div class="hn" style="left:647px">4</div><div class="ht" style="left:647px"></div>
<div class="hn" style="left:697px">5</div><div class="ht" style="left:697px"></div>
<div class="hn" style="left:747px">6</div><div class="ht" style="left:747px"></div>
<div class="hn" style="left:797px">7</div><div class="ht" style="left:797px"></div>
<div class="hn" style="left:847px">8</div><div class="ht" style="left:847px"></div>
<div class="hn" style="left:897px">9</div><div class="ht" style="left:897px"></div>
<div class="hn" style="left:947px">10</div><div class="ht" style="left:947px"></div>
<div class="hn" style="left:997px">11</div><div class="ht" style="left:997px"></div>
<div class="hn" style="left:1047px">12</div><div class="ht" style="left:1047px"></div>
<div class="hn" style="left:1097px">13</div><div class="ht" style="left:1097px"></div>
<div class="hn" style="left:1147px">14</div><div class="ht" style="left:1147px"></div>
<div class="hn" style="left:1197px">15</div><div class="ht" style="left:1197px"></div>
<div class="hn" style="left:1247px">16</div><div class="ht" style="left:1247px"></div>
<div class="hn" style="left:1297px">17</div><div class="ht" style="left:1297px"></div>
<div class="hn" style="left:1347px">18</div><div class="ht" style="left:1347px"></div>
<div class="hn" style="left:1397px">19</div><div class="ht" style="left:1397px"></div>
<div class="hn" style="left:1447px">20</div><div class="ht" style="left:1447px"></div>
</div>
<div id="vr">
<div class="vn" style="top:38px">-2</div><div class="vt" style="top:43px"></div>
<div class="vn" style="top:88px">-1</div><div class="vt" style="top:93px"></div>
<div class="vn" style="top:138px">0</div><div class="vt" style="top:143px"></div>
<div class="vn" style="top:188px">1</div><div class="vt" style="top:193px"></div>
<div class="vn" style="top:238px">2</div><div class="vt" style="top:243px"></div>
<div class="vn" style="top:288px">3</div><div class="vt" style="top:293px"></div>
<div class="vn" style="top:338px">4</div><div class="vt" style="top:343px"></div>
<div class="vn" style="top:388px">5</div><div class="vt" style="top:393px"></div>
<div class="vn" style="top:438px">6</div><div class="vt" style="top:443px"></div>
<div class="vn" style="top:488px">7</div><div class="vt" style="top:493px"></div>
<div class="vn" style="top:538px">8</div><div class="vt" style="top:543px"></div>
<div class="vn" style="top:588px">9</div><div class="vt" style="top:593px"></div>
<div class="vn" style="top:638px">10</div><div class="vt" style="top:643px"></div>
<div class="vn" style="top:688px">11</div><div class="vt" style="top:693px"></div>
<div class="vn" style="top:738px">12</div><div class="vt" style="top:743px"></div>
<div class="vn" style="top:788px">13</div><div class="vt" style="top:793px"></div>
<div class="vn" style="top:838px">14</div><div class="vt" style="top:843px"></div>
<div class="abs" style="left:0;top:0;width:24px;height:24px;background:#d2e4ea"></div><div class="abs" style="left:0;top:24px;width:24px;height:1px;background:#2e9ba6"></div>
<div class="abs" style="left:8.500px;top:7.500px;font-size:12px;color:#2fa3b0">in</div>
</div>
<div class="abs" style="left:0;top:1023px;width:1920px;height:1px;background:#8d9198"></div>
<div id="right">
 <!-- Make button abs 1582..1891, y 72..120 => rel x 39..348, y 14..62 -->
 <div class="abs" style="left:39px;top:14px;width:309px;height:48px;border-radius:24px;background:linear-gradient(180deg,#9aeee9 0%,#8eebe6 20%,#8ceae5 85%,#80ddd8 100%);box-shadow:0 1.500px 1.500px rgba(100,195,190,.7)"></div>
 <svg class="abs" style="left:157px;top:24px" width="28" height="30" viewBox="0 0 28 30"><circle cx="14.500" cy="17.500" r="8.500" fill="#e9f9f3"/><path d="M5.500 10 L3.500 7.500 M10 6.500 L8.500 3.500 M16 5.500 L15.500 2.500" stroke="#f2c14a" stroke-width="2.200" stroke-linecap="round"/><path d="M11 17 C12.500 14.500 15.500 17.500 17 16.500 M16 18.500 L21.500 25.500" stroke="#f6c233" stroke-width="1.800" fill="none" stroke-linecap="round"/><path d="M22.500 26 L22.500 21.500 M22.500 26 L18 26" stroke="#f6a92e" stroke-width="2.200" fill="none" stroke-linecap="round"/></svg>
 <div class="abs" style="left:189px;top:30px;font-size:17px;color:#eafffd;letter-spacing:0">Make</div>
 <div class="abs" style="left:0;top:76px;width:377px;height:1px;background:#e3e5e8"></div>
 <!-- Design / Layers -->
 <div class="abs" style="left:23px;top:97px;font-size:18px;color:#5a5f69;letter-spacing:.2px">Design</div>
 <div class="abs" style="left:95px;top:89px;width:75px;height:37px;border-radius:7px;background:#f1f4f5"></div>
 <div class="abs" style="left:105px;top:97px;font-size:18px;color:#1c1e22;letter-spacing:.2px">Layers</div>
 <svg class="abs" style="left:344px;top:98px" width="18" height="18" viewBox="0 0 18 18"><path d="M1.500 2.500 H15.500 M1.500 9 H9 M1.500 15.500 H9" stroke="#555a63" stroke-width="1.500" fill="none"/><path d="M16 6.500 V14.500 L10.500 10.500 Z" fill="#555a63"/></svg>
 <div class="abs" style="left:0;top:137px;width:377px;height:1px;background:#e3e5e8"></div>
 <!-- Group rows: y 221 and 271 abs => rel 163, 213 -->
 <svg class="abs" style="left:20px;top:155px" width="14" height="18" viewBox="0 0 14 18"><path d="M3.500 2 L10.500 9 L3.500 16" fill="none" stroke="#555a63" stroke-width="1.500"/></svg>
 <svg class="abs" style="left:43px;top:155px" width="18" height="16" viewBox="0 0 18 16"><path d="M1 2 a1 1 0 0 1 1 -1 H6.500 L8 3 H16 a1 1 0 0 1 1 1 V14.500 H1 Z" fill="#dfe1e5"/><path d="M1 5.500 H17 V14 a1 1 0 0 1 -1 1 H2 a1 1 0 0 1 -1 -1 Z" fill="#5a5f6b"/></svg>
 <div class="abs" style="left:67px;top:155px;font-size:15.500px;color:#5a5f69;letter-spacing:.2px">Group</div>
 <svg class="abs" style="left:336px;top:155px" width="20" height="16" viewBox="0 0 20 16"><ellipse cx="10" cy="8" rx="8" ry="5.500" fill="none" stroke="#4d525c" stroke-width="1.500"/><circle cx="10" cy="8" r="3" fill="#4d525c"/></svg>
 <svg class="abs" style="left:20px;top:205px" width="14" height="18" viewBox="0 0 14 18"><path d="M3.500 2 L10.500 9 L3.500 16" fill="none" stroke="#555a63" stroke-width="1.500"/></svg>
 <svg class="abs" style="left:43px;top:205px" width="18" height="16" viewBox="0 0 18 16"><path d="M1 2 a1 1 0 0 1 1 -1 H6.500 L8 3 H16 a1 1 0 0 1 1 1 V14.500 H1 Z" fill="#dfe1e5"/><path d="M1 5.500 H17 V14 a1 1 0 0 1 -1 1 H2 a1 1 0 0 1 -1 -1 Z" fill="#5a5f6b"/></svg>
 <div class="abs" style="left:67px;top:205px;font-size:15.500px;color:#5a5f69;letter-spacing:.2px">Group</div>
 <svg class="abs" style="left:336px;top:205px" width="20" height="16" viewBox="0 0 20 16"><ellipse cx="10" cy="8" rx="8" ry="5.500" fill="none" stroke="#4d525c" stroke-width="1.500"/><circle cx="10" cy="8" r="3" fill="#4d525c"/></svg>
 <!-- note box abs x 1557..1915, y 876..942 => rel 14..372, 818..884 -->
 <div class="abs" style="left:14px;top:818px;width:358px;height:66px;border-radius:6px;background:#f1f6fd"></div>
 <div class="abs" style="left:34px;top:842px;width:18px;height:18px;border-radius:50%;background:#3c82dc"></div>
 <div class="abs" style="left:42px;top:846px;width:2px;height:2px;background:#fff"></div>
 <div class="abs" style="left:42px;top:850px;width:2px;height:7px;background:#fff"></div>
 <div class="abs" style="left:61px;top:830px;width:300px;font-size:15px;line-height:22px;color:#5a5f69;letter-spacing:.72px">Note to use material in corresponding color!</div>
 <!-- bottom bar abs y 956..1022 => rel 898 -->
 <div class="abs" style="left:0;top:898px;width:377px;height:68px;background:#e4e6ea"></div>
 <svg class="abs" style="left:36px;top:910px" width="24" height="24" viewBox="0 0 24 24"><g fill="none" stroke="#c9ccd3" stroke-width="1.300"><path d="M1 5 V1 H5 M19 1 H23 V5 M23 19 V23 H19 M5 23 H1 V19"/><rect x="5" y="5" width="10" height="10"/><rect x="10" y="10" width="10" height="10"/></g></svg>
 <div class="abs" style="left:28px;top:943px;font-size:14px;color:#c3c6cd;letter-spacing:-.2px">Group</div>
 <svg class="abs" style="left:116px;top:910px" width="24" height="24" viewBox="0 0 24 24"><g fill="none" stroke="#c9ccd3" stroke-width="1.300"><rect x="3" y="3" width="10" height="10"/><rect x="10" y="10" width="11" height="11"/><rect x="1.500" y="1.500" width="3" height="3"/><rect x="11.500" y="1.500" width="3" height="3"/><rect x="1.500" y="11.500" width="3" height="3"/><rect x="19.500" y="19.500" width="3" height="3"/><rect x="8.500" y="19.500" width="3" height="3"/><rect x="19.500" y="8.500" width="3" height="3"/></g></svg>
 <div class="abs" style="left:101px;top:943px;font-size:14px;color:#c3c6cd;letter-spacing:-.2px">Ungroup</div>
 <svg class="abs" style="left:327px;top:909px" width="24" height="26" viewBox="0 0 24 26"><g fill="none" stroke="#2f333a" stroke-width="1.600" stroke-linejoin="round" stroke-linecap="round"><path d="M2 5.500 H22"/><path d="M8.500 5.500 V3 H15.500 V5.500"/><path d="M4 5.500 L5 21 a2 2 0 0 0 2 2 H17 a2 2 0 0 0 2 -2 L20 5.500"/><path d="M10 12 V16 M14 12 V16"/></g></svg>
 <div class="abs" style="left:319px;top:943px;font-size:14px;color:#2f333a;letter-spacing:-.2px">Delete</div>
</div>
</body></html>
